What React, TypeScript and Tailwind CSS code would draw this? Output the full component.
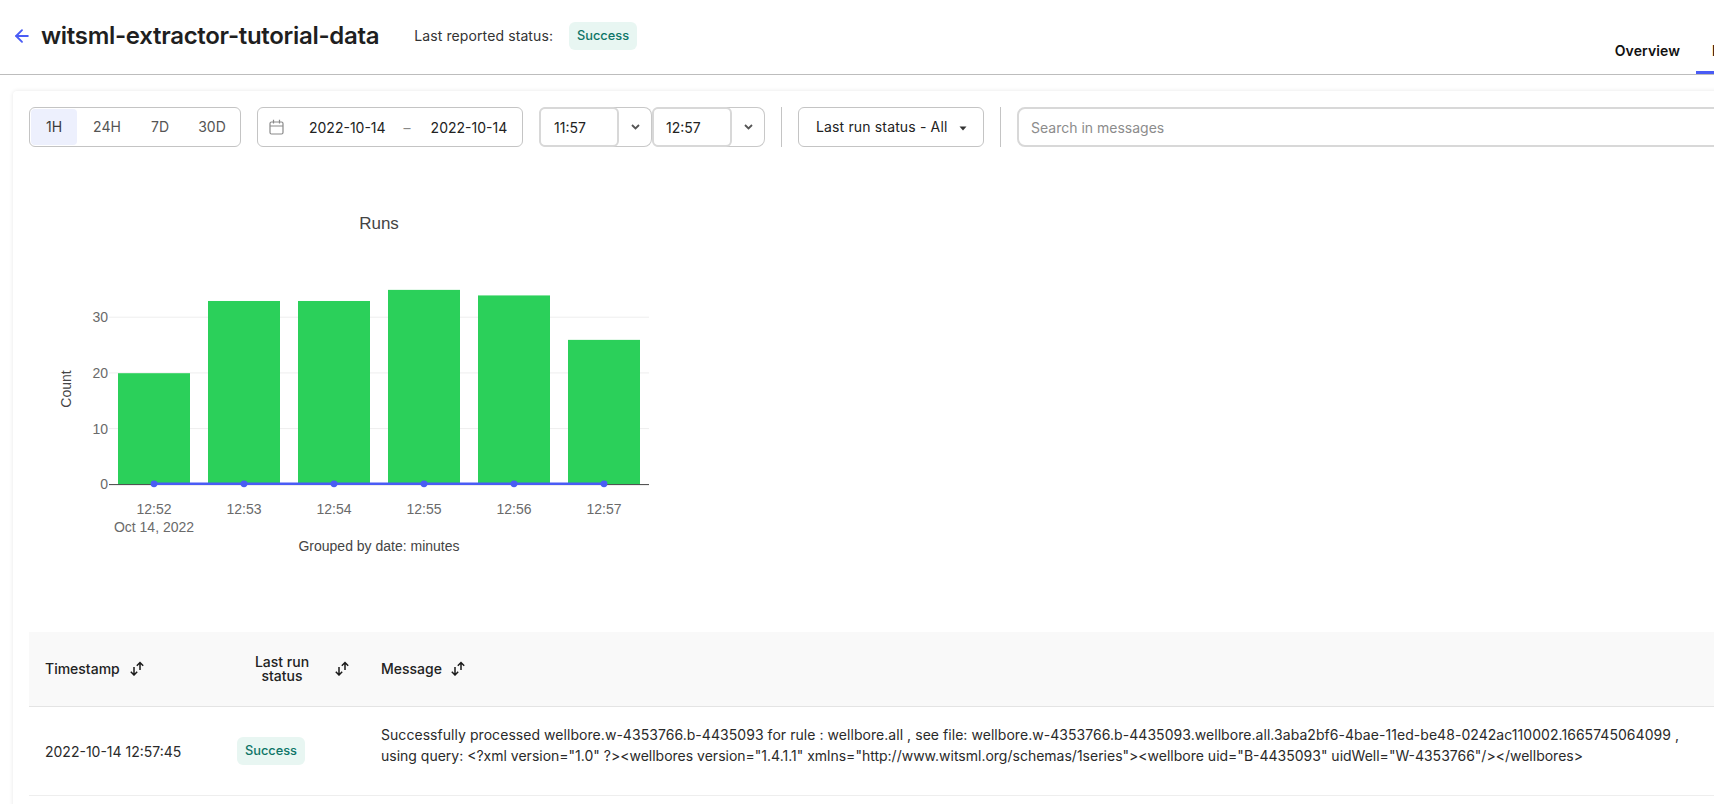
import React from "react";
import { ArrowLeft } from "lucide-react";

const Badge = () => (
  <span className="inline-flex h-[28px] w-[68px] items-center justify-center rounded-[6px] bg-[#e8f6f2] text-[12.8px] font-medium text-[#0e7567]">Success</span>
);

const SortIcon = () => (
  <svg width="16" height="15" viewBox="0 0 16 15" fill="none" stroke="#1a1a1a" strokeWidth="1.5" className="shrink-0">
    <path d="M5 6V14M1.8 10.8L5 14L8.2 10.8" />
    <path d="M11 9V1.5M7.8 4.7L11 1.5L14.2 4.7" />
  </svg>
);

const CalIcon = () => (
  <svg width="15" height="16" viewBox="0 0 15 16" fill="none" stroke="#8a8a8a" strokeWidth="1.2" className="shrink-0">
    <rect x="1" y="3" width="13" height="12" rx="1.5" />
    <path d="M1 7H14M4.5 0.8V4.5M10.5 0.8V4.5" />
  </svg>
);

const Chev = () => (
  <svg width="9" height="6" viewBox="0 0 9 6" fill="none" stroke="#555" strokeWidth="1.8"><path d="M1 1L4.5 4.5L8 1" /></svg>
);

const Chart = () => {
  const vals = [20, 33, 33, 35, 34, 26];
  const labels = ["12:52", "12:53", "12:54", "12:55", "12:56", "12:57"];
  const y0 = 484.3;
  const unit = 5.57;
  const barUnit = 5.555;
  const gray = "#6a6a6a";
  return (
    <svg width="640" height="370" viewBox="30 200 640 370" className="block" style={{ fontFamily: '"Liberation Sans", Arial, sans-serif' }}>
      <text x="379" y="229" textAnchor="middle" fontSize="17" fill="#444">Runs</text>
      {[10, 20, 30].map((t) => (
        <line key={t} x1="109" x2="649" y1={y0 - t * unit} y2={y0 - t * unit} stroke="#eeeeee" />
      ))}
      {vals.map((v, i) => (
        <rect key={i} x={118 + i * 90} y={y0 - v * barUnit} width="72" height={v * barUnit} fill="#2bd05a" />
      ))}
      <line x1="109" x2="649" y1={y0 + 0.3} y2={y0 + 0.3} stroke="#444" />
      <line x1="154" x2="604" y1={y0 - 0.5} y2={y0 - 0.5} stroke="#4a5cf5" strokeWidth="2.5" />
      {vals.map((_, i) => (
        <circle key={i} cx={154 + i * 90} cy={y0 - 0.5} r="3.4" fill="#4a5cf5" />
      ))}
      {[0, 10, 20, 30].map((t) => (
        <text key={t} x="108" y={y0 - t * unit + 5} textAnchor="end" fontSize="14" fill={gray}>{t}</text>
      ))}
      {labels.map((l, i) => (
        <text key={l} x={154 + i * 90} y="514" textAnchor="middle" fontSize="14" fill={gray}>{l}</text>
      ))}
      <text x="154" y="532" textAnchor="middle" fontSize="14" fill={gray}>Oct 14, 2022</text>
      <text x="379" y="551" textAnchor="middle" fontSize="14" fill="#444">Grouped by date: minutes</text>
      <text transform="translate(70.5 389) rotate(-90)" textAnchor="middle" fontSize="14" fill="#444">Count</text>
    </svg>
  );
};

export default function App() {
  return (
    <div className="h-[804px] w-[1714px] overflow-hidden bg-white text-[#1a1a1a]" style={{ fontFamily: 'Inter, sans-serif' }}>
      <header className="flex h-[75px] border-b border-[#bdbdbd] pl-[12px]">
        <div className="flex h-[71px] items-center">
          <ArrowLeft size={20} className="text-[#4a5cf5]" strokeWidth={2.25} />
          <h1 className="ml-[9px] text-[24px] leading-[32px] font-semibold tracking-[-0.3px] text-[#1f1f1f]">witsml-extractor-tutorial-data</h1>
          <span className="ml-[35px] text-[14px] tracking-[0.1px] text-[#333]">Last reported status:</span>
          <span className="ml-[16px] flex"><Badge /></span>
        </div>
        <nav className="ml-auto flex items-start pt-[42px]">
          <span className="text-[14px] font-semibold leading-[17px] tracking-[0.1px] text-[#111]">Overview</span>
          <span className="ml-[16px] h-full w-[18px] overflow-hidden border-b-[3px] border-[#4a5cf5] pl-[16px] text-[14px] font-semibold leading-[17px] whitespace-nowrap text-[#111]">Run history</span>
        </nav>
      </header>
      <main className="ml-[13px] mt-[16px] h-[800px] w-[1760px] rounded-tl-[4px] bg-white pl-[16px] pt-[16px] shadow-[0_0_4px_rgba(0,0,0,0.1)]">
        <div className="flex h-[40px] items-stretch text-[14px] text-[#333]">
          <div className="flex w-[212px] shrink-0 items-stretch rounded-[6px] border border-[#c4c4c4] p-[1px]">
            <span className="flex w-[46px] shrink-0 items-center justify-center rounded-[4px] bg-[#edf0fd] pb-[2px] text-[#3a3a3a]">1H</span>
            <span className="flex w-[60px] shrink-0 items-center justify-center pb-[2px] text-[#555]">24H</span>
            <span className="flex w-[46px] shrink-0 items-center justify-center pb-[2px] text-[#555]">7D</span>
            <span className="flex w-[58px] shrink-0 items-center justify-center pb-[2px] text-[#555]">30D</span>
          </div>
          <div className="ml-[16px] flex w-[266px] shrink-0 items-center rounded-[6px] border border-[#c4c4c4] pl-[11px] whitespace-nowrap text-[#222]">
            <CalIcon />
            <span className="ml-[25px]">2022-10-14</span>
            <span className="ml-[18px] text-[#888]">–</span>
            <span className="ml-[20px]">2022-10-14</span>
          </div>
          <div className="ml-[16px] flex w-[113px] shrink-0 rounded-r-[8px] rounded-l-[8px] border-y border-r border-[#c8c8c8]">
            <span className="-my-px flex w-[80px] items-center rounded-[6px] border-2 border-[#d8d8d8] pl-[13px] text-[#222]">11:57</span>
            <span className="flex flex-1 items-center justify-center"><Chev /></span>
          </div>
          <div className="flex w-[113px] shrink-0 rounded-r-[8px] rounded-l-[8px] border-y border-r border-[#c8c8c8]">
            <span className="-my-px flex w-[80px] items-center rounded-[6px] border-2 border-[#d8d8d8] pl-[12px] text-[#222]">12:57</span>
            <span className="flex flex-1 items-center justify-center"><Chev /></span>
          </div>
          <div className="ml-[16px] w-px shrink-0 bg-[#c4c4c4]" />
          <div className="ml-[16px] flex w-[186px] shrink-0 items-center rounded-[6px] border border-[#c4c4c4] pb-[2px] pl-[17px] tracking-[0.15px] whitespace-nowrap text-[#222]">
            Last run status - All
            <svg width="8" height="5" viewBox="0 0 8 5" className="ml-[11px] mt-[5px]"><path d="M0.5 0.5H7.5L4 4.5Z" fill="#333" /></svg>
          </div>
          <div className="ml-[16px] w-px shrink-0 bg-[#c4c4c4]" />
          <div className="ml-[16px] flex w-[800px] shrink-0 items-center rounded-[8px] border-2 border-[#d8d8d8] pl-[12px] text-[#8c8c8c]">Search in messages</div>
        </div>
        <div className="mt-[53px] ml-[1px]"><Chart /></div>
        <div className="mt-[62px] text-[14px]">
          <div className="flex h-[75px] items-center border-b border-[#e4e4e4] bg-[#f9f9f9] pb-[2px] font-medium text-[#222]">
            <div className="flex w-[208px] items-center gap-[9px] pl-[16px]">Timestamp <SortIcon /></div>
            <div className="flex w-[144px] items-center">
              <div className="w-[90px] pt-[2px] text-center leading-[14px]">Last run<br />status</div>
              <div className="ml-[7px]"><SortIcon /></div>
            </div>
            <div className="flex items-center gap-[8px]">Message <SortIcon /></div>
          </div>
          <div className="flex h-[89px] items-center border-b border-[#eeeeee] text-[#2a2a2a]">
            <div className="w-[208px] pl-[16px]">2022-10-14 12:57:45</div>
            <div className="flex w-[144px]"><Badge /></div>
            <div className="whitespace-nowrap pb-[12px] leading-[21px]">
              <span className="tracking-[0.05px]">Successfully processed wellbore.w-4353766.b-4435093 for rule : wellbore.all , see file: wellbore.w-4353766.b-4435093.wellbore.all.3aba2bf6-4bae-11ed-be48-0242ac110002.1665745064099 ,</span><br />
              using query: {'<?xml version="1.0" ?><wellbores version="1.4.1.1" xmlns="http://www.witsml.org/schemas/1series"><wellbore uid="B-4435093" uidWell="W-4353766"/></wellbores>'}
            </div>
          </div>
        </div>
      </main>
    </div>
  );
}
